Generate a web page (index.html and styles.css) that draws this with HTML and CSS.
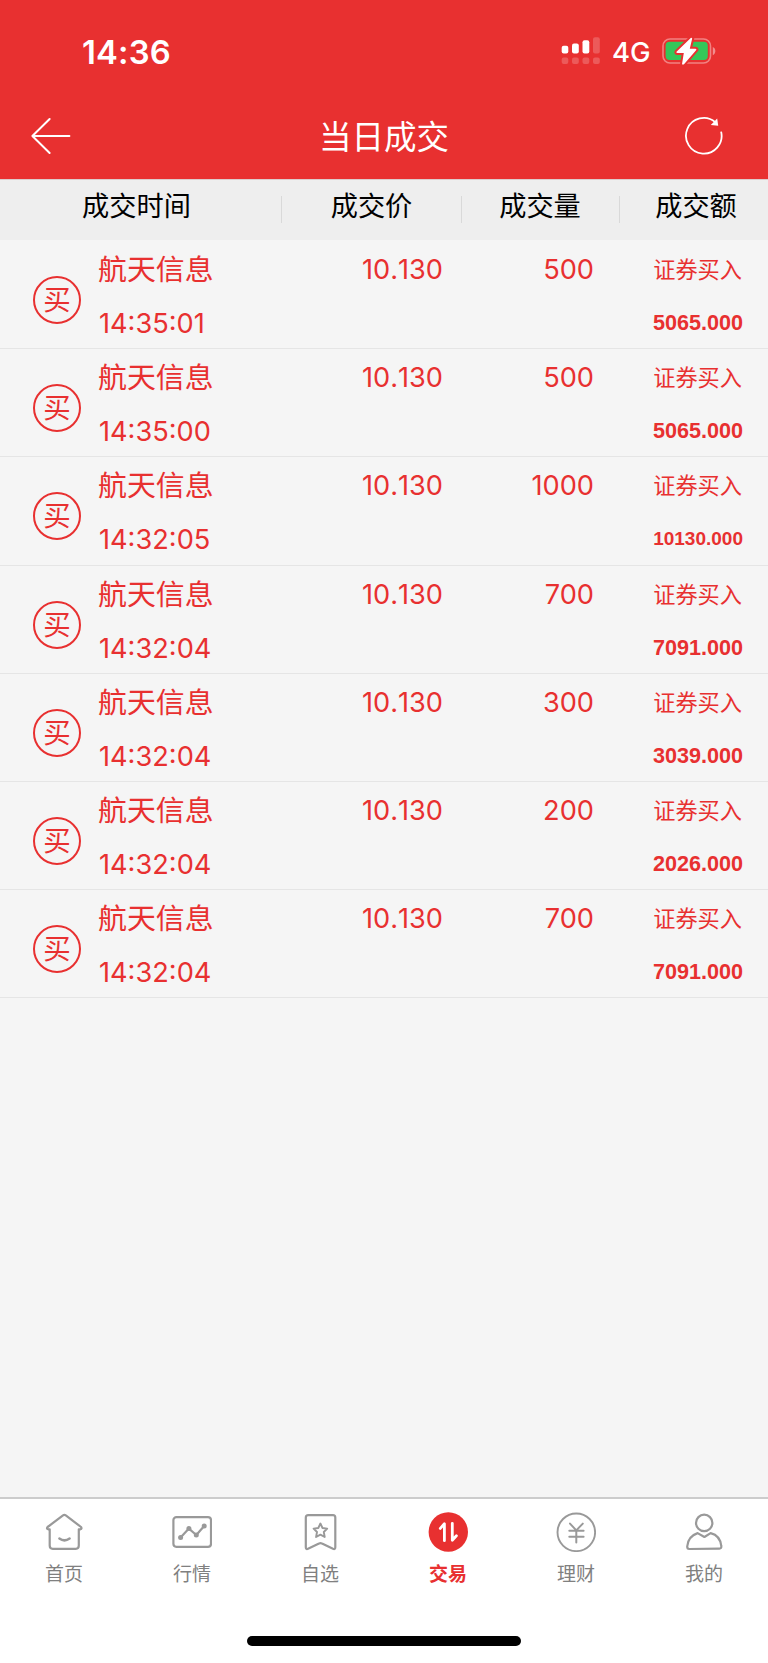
FILE: index.html
```
<!DOCTYPE html>
<html lang="zh-CN">
<head>
  <meta charset="UTF-8">
  <meta name="viewport" content="width=device-width, initial-scale=1.0">
  <title>当日成交</title>
  <link rel="stylesheet" href="styles.css">
</head>
<body>

  <header class="header">
    <div class="status-bar">
      <span class="clock">14:36</span>
      <div class="status-right">
        <svg class="signal" width="40" height="28" viewBox="0 0 40 28" fill="#fff">
          <rect x="0.7" y="8.7" width="6.6" height="7.8" rx="2"/>
          <rect x="11" y="6.5" width="6.8" height="10" rx="2"/>
          <rect x="21.5" y="3.3" width="6.8" height="13.2" rx="2"/>
          <g opacity="0.2">
            <rect x="32" y="0.2" width="6.8" height="16.3" rx="2"/>
            <rect x="0.7" y="20.4" width="6.6" height="6.6" rx="2"/>
            <rect x="11" y="20.4" width="6.8" height="6.6" rx="2"/>
            <rect x="21.5" y="20.4" width="6.8" height="6.6" rx="2"/>
            <rect x="32" y="20.4" width="6.8" height="6.6" rx="2"/>
          </g>
        </svg>
        <span class="network">4G</span>
        <svg class="battery" width="54" height="28" viewBox="0 0 54 28">
          <rect x="1" y="2" width="47.5" height="24" rx="7" fill="none" stroke="#fff" stroke-opacity="0.4" stroke-width="1.6"/>
          <path d="M50.8 10v8.2c3.4-1.2 3.4-7 0-8.2z" fill="#fff" fill-opacity="0.45"/>
          <rect x="3.6" y="4.8" width="42.2" height="18.3" rx="4" fill="#34c759"/>
          <path d="M29 0.8L14.5 14.8Q14 16 15.5 16H21.8L20 27.2Q21 28 22 27.2L34.3 13Q34.8 12 33.5 11.8H27.8L30.2 1.6Q29.8 0.6 29 0.8z" fill="#fff" stroke="#e83030" stroke-width="4" paint-order="stroke"/>
        </svg>
      </div>
    </div>
    <div class="nav-bar">
      <svg class="back" width="40" height="38" viewBox="0 0 40 38" fill="none" stroke="#fff" stroke-width="2" stroke-linecap="round" stroke-linejoin="round">
        <path d="M18.6 2L1.4 19L18.6 36M1.4 19H38.4"/>
      </svg>
      <h1 class="title">当日成交</h1>
      <svg class="refresh" width="40" height="40" viewBox="0 0 40 40">
        <path d="M37.1 15.6A17.8 17.8 0 1 1 31.3 6.2" fill="none" stroke="#fff" stroke-width="1.8"/>
        <path d="M33.2 2.6L34.2 9.8L26.8 9z" fill="#fff"/>
      </svg>
    </div>
  </header>

  <div class="columns">
    <div class="col col-time">成交时间</div>
    <div class="col">成交价</div>
    <div class="col col-volume">成交量</div>
    <div class="col col-amount">成交额</div>
  </div>

  <main class="list">
    <div class="row">
      <div class="badge">买</div>
      <div class="stock"><div>航天信息</div><div class="time">14:35:01</div></div>
      <div class="num price">10.130</div>
      <div class="num">500</div>
      <div class="deal"><div>证券买入</div><div class="amount">5065.000</div></div>
    </div>
    <div class="row">
      <div class="badge">买</div>
      <div class="stock"><div>航天信息</div><div class="time">14:35:00</div></div>
      <div class="num price">10.130</div>
      <div class="num">500</div>
      <div class="deal"><div>证券买入</div><div class="amount">5065.000</div></div>
    </div>
    <div class="row">
      <div class="badge">买</div>
      <div class="stock"><div>航天信息</div><div class="time">14:32:05</div></div>
      <div class="num price">10.130</div>
      <div class="num">1000</div>
      <div class="deal"><div>证券买入</div><div class="amount amount-small">10130.000</div></div>
    </div>
    <div class="row">
      <div class="badge">买</div>
      <div class="stock"><div>航天信息</div><div class="time">14:32:04</div></div>
      <div class="num price">10.130</div>
      <div class="num">700</div>
      <div class="deal"><div>证券买入</div><div class="amount">7091.000</div></div>
    </div>
    <div class="row">
      <div class="badge">买</div>
      <div class="stock"><div>航天信息</div><div class="time">14:32:04</div></div>
      <div class="num price">10.130</div>
      <div class="num">300</div>
      <div class="deal"><div>证券买入</div><div class="amount">3039.000</div></div>
    </div>
    <div class="row">
      <div class="badge">买</div>
      <div class="stock"><div>航天信息</div><div class="time">14:32:04</div></div>
      <div class="num price">10.130</div>
      <div class="num">200</div>
      <div class="deal"><div>证券买入</div><div class="amount">2026.000</div></div>
    </div>
    <div class="row">
      <div class="badge">买</div>
      <div class="stock"><div>航天信息</div><div class="time">14:32:04</div></div>
      <div class="num price">10.130</div>
      <div class="num">700</div>
      <div class="deal"><div>证券买入</div><div class="amount">7091.000</div></div>
    </div>
  </main>

  <footer class="footer">
    <nav class="tabs">
      <a class="tab">
        <svg width="40" height="40" viewBox="0 0 40 40">
          <path d="M5.7 17.3H4.2Q2.2 16.6 3.6 15L19 3.4Q20.4 2.4 21.8 3.4L37 15Q38.2 16.6 36.4 17.3H34.8V33.5Q34.8 36.8 31.8 36.8H8.7Q5.7 36.8 5.7 33.5z"/>
          <path d="M15.4 26.5Q20.4 30.2 25.6 26.5" stroke-width="2.5"/>
        </svg>
        <span>首页</span>
      </a>
      <a class="tab">
        <svg width="40" height="40" viewBox="0 0 40 40">
          <rect x="1.4" y="5.1" width="37.6" height="29.7" rx="3"/>
          <path d="M8.6 25.5L16.9 16.6L24.3 23L32.2 14"/>
          <g fill="#999" stroke="none"><circle cx="8.6" cy="25.5" r="2.5"/><circle cx="16.9" cy="16.6" r="2.5"/><circle cx="24.3" cy="23" r="2.5"/><circle cx="32.2" cy="14" r="2.5"/></g>
        </svg>
        <span>行情</span>
      </a>
      <a class="tab">
        <svg width="40" height="40" viewBox="0 0 40 40">
          <path d="M5.8 5.5Q5.8 3.1 8.2 3.1H33Q35.3 3.1 35.3 5.5V35.2Q35.3 37.8 33 36.8L22 31.6Q20.5 30.8 19 31.6L8 36.8Q5.8 37.8 5.8 35.2z"/>
          <path d="M20.4 11.5L22.5 16L27.2 16.6L23.8 20L24.7 25L20.4 22.6L16.1 25L17 20L13.6 16.6L18.3 16z" stroke-width="1.9"/>
        </svg>
        <span>自选</span>
      </a>
      <a class="tab active">
        <svg width="40" height="40" viewBox="0 0 40 40">
          <circle cx="20.3" cy="20" r="19.7" fill="#e83030" stroke="none"/>
          <path d="M12.3 16.4L16.4 11.8V28.7M24.3 11.3V28.3L28.4 23.8" stroke="#fff" stroke-width="2.8"/>
        </svg>
        <span>交易</span>
      </a>
      <a class="tab">
        <svg width="40" height="40" viewBox="0 0 40 40">
          <circle cx="20.3" cy="20.3" r="18.8" stroke-width="1.9"/>
          <path d="M14 11.6L20.3 18.4L26.8 11.6M13.3 18.8H27.6M13.3 24.8H27.6M20.3 18.4V30.5" stroke-width="2"/>
        </svg>
        <span>理财</span>
      </a>
      <a class="tab">
        <svg width="40" height="40" viewBox="0 0 40 40">
          <circle cx="20.2" cy="10.9" r="8.2"/>
          <path d="M13.6 21.1Q4 24.3 3.2 34.5Q3.2 37 5.2 37L35.4 36.6Q37.7 36.6 37.3 34C36.6 27 33.2 22.8 26.6 21.1L20.4 25z"/>
        </svg>
        <span>我的</span>
      </a>
    </nav>
    <div class="home-indicator"></div>
  </footer>

</body>
</html>
```
FILE: styles.css
```
* {
  box-sizing: border-box;
}

body {
  margin: 0;
  height: 1663px;
  display: flex;
  flex-direction: column;
  background: #f5f5f5;
  font-family: 'Inter', 'Noto Sans CJK SC', sans-serif;
  overflow: hidden;
}

.header {
  height: 179px;
  flex: none;
  background: #e83030;
  color: #fff;
}

.status-bar {
  height: 102px;
  padding: 0 52px 0 82px;
  display: flex;
  justify-content: space-between;
  align-items: center;
}

.clock {
  padding-top: 1px;
  font-size: 32.8px;
  font-weight: 600;
  letter-spacing: 0.2px;
}

.status-right {
  display: flex;
  align-items: center;
}

.network {
  margin: 2px 12px 0 11px;
  font-size: 27.5px;
  line-height: 30px;
  font-weight: 450;
  width: 38px;
}

.nav-bar {
  height: 68px;
  padding: 0 44px 0 31px;
  display: grid;
  grid-template-columns: 60px 1fr 47px;
  align-items: center;
}

.title {
  margin: 0;
  padding-top: 3px;
  font-size: 32.5px;
  font-weight: 400;
  line-height: 40px;
  text-align: center;
}

.refresh {
  justify-self: end;
}

.columns {
  height: 61px;
  flex: none;
  display: grid;
  grid-template-columns: 282px 180px 158px 148px;
  padding-top: 16px;
  border-top: 1px solid #dccccc;
  background: #eee;
}

.col {
  height: 27px;
  border-right: 1px solid #d9d9d9;
  font-size: 27.2px;
  line-height: 22px;
  text-align: center;
  color: #000;
}

.col-time {
  padding-right: 8px;
}

.col-volume {
  padding-right: 1px;
}

.col-amount {
  padding-left: 4px;
  border-right: none;
}

.list {
  flex: 1;
  padding-top: 1px;
}

.row {
  height: 108.2px;
  padding-top: 2px;
  display: grid;
  grid-template-columns: 98px 184px 161px 151px 149px;
  border-bottom: 1px solid #e5e5e5;
  color: #e83030;
  line-height: 54px;
}

.badge {
  width: 48px;
  height: 48px;
  margin: 33px 0 0 33px;
  border: 2px solid #e83030;
  border-radius: 50%;
  font-size: 27.5px;
  line-height: 44px;
  text-align: center;
}

.stock {
  font-size: 28.9px;
}

.time {
  padding-left: 1px;
  font-size: 27.2px;
}

.num {
  font-size: 27.2px;
  text-align: right;
}

.price {
  font-kerning: none;
}

.deal {
  padding-right: 1px;
  font-size: 22.2px;
  text-align: right;
}

.amount {
  margin-right: -1px;
  font-family: 'Liberation Sans', sans-serif;
  font-size: 21.6px;
  font-weight: bold;
  line-height: 52px;
}

.amount-small {
  font-size: 19px;
}

.footer {
  height: 166px;
  flex: none;
  border-top: 2px solid #ccc;
  background: #fff;
}

.tabs {
  height: 132px;
  padding-top: 13px;
  display: grid;
  grid-template-columns: repeat(6, 1fr);
}

.tab {
  display: flex;
  flex-direction: column;
  align-items: center;
  gap: 11px;
  font-size: 19px;
  line-height: 24px;
  color: #808080;
}

.tab svg {
  fill: none;
  stroke: #999;
  stroke-width: 2.2;
  stroke-linecap: round;
  stroke-linejoin: round;
}

.tab.active {
  color: #e83030;
  font-weight: 600;
}

.home-indicator {
  width: 274px;
  height: 10px;
  margin: 5px auto 0;
  border-radius: 5px;
  background: #000;
}
```
